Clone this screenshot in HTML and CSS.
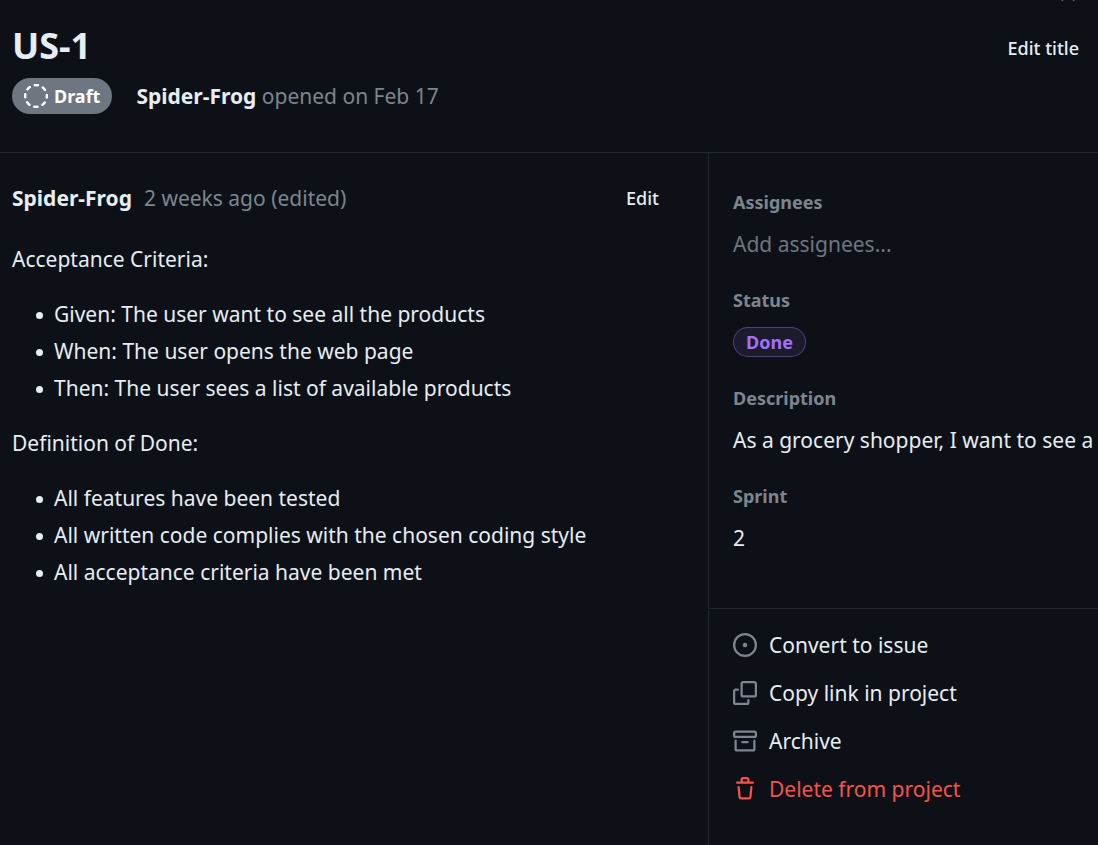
FILE: index.html
```html
<!DOCTYPE html>
<html lang="en">
<head>
<meta charset="utf-8">
<meta name="viewport" content="width=device-width, initial-scale=1">
<title>US-1</title>
<link rel="stylesheet" href="styles.css">
</head>
<body>
<div class="panel">
  <button class="close" type="button" aria-label="Close">
    <svg class="icon" viewBox="0 0 16 16" aria-hidden="true"><path d="M3.72 3.72a.75.75 0 0 1 1.06 0L8 6.94l3.22-3.22a.749.749 0 0 1 1.275.326.749.749 0 0 1-.215.734L9.06 8l3.22 3.22a.749.749 0 0 1-.326 1.275.749.749 0 0 1-.734-.215L8 9.06l-3.22 3.22a.751.751 0 0 1-1.042-.018.751.751 0 0 1-.018-1.042L6.94 8 3.72 4.78a.75.75 0 0 1 0-1.06Z"/></svg>
  </button>
  <header class="header">
    <div class="title-row">
      <h1 class="title">US-1</h1>
      <button class="text-button" type="button">Edit title</button>
    </div>
    <div class="meta">
      <span class="state">
        <svg class="icon" viewBox="0 0 16 16" aria-hidden="true"><circle cx="8" cy="8" r="7.25" fill="none" stroke="currentColor" stroke-width="1.6" stroke-linecap="round" stroke-dasharray="2.2 3.494" stroke-dashoffset="1.1"/></svg>
        Draft
      </span>
      <p class="opened"><strong class="author">Spider-Frog</strong> opened on Feb 17</p>
    </div>
  </header>
  <div class="columns">
    <main class="content">
      <div class="comment-head">
        <strong class="author">Spider-Frog</strong>
        <span class="time">2 weeks ago (edited)</span>
        <button class="text-button edit" type="button">Edit</button>
      </div>
      <div class="body">
        <p>Acceptance Criteria:</p>
        <ul>
          <li>Given: The user want to see all the products</li>
          <li>When: The user opens the web page</li>
          <li>Then: The user sees a list of available products</li>
        </ul>
        <p>Definition of Done:</p>
        <ul>
          <li>All features have been tested</li>
          <li>All written code complies with the chosen coding style</li>
          <li>All acceptance criteria have been met</li>
        </ul>
      </div>
    </main>
    <aside class="sidebar">
      <dl class="fields">
        <div class="field"><dt>Assignees</dt><dd><button class="value placeholder" type="button">Add assignees...</button></dd></div>
        <div class="field"><dt>Status</dt><dd><button class="value" type="button"><span class="status">Done</span></button></dd></div>
        <div class="field"><dt>Description</dt><dd><button class="value" type="button">As a grocery shopper, I want to see a</button></dd></div>
        <div class="field"><dt>Sprint</dt><dd><button class="value" type="button">2</button></dd></div>
      </dl>
      <div class="actions">
        <button class="action" type="button">
          <svg class="icon" viewBox="0 0 16 16" aria-hidden="true"><path d="M8 9.5a1.5 1.5 0 1 0 0-3 1.5 1.5 0 0 0 0 3Z"/><path d="M8 0a8 8 0 1 1 0 16A8 8 0 0 1 8 0ZM1.5 8a6.5 6.5 0 1 0 13 0 6.5 6.5 0 0 0-13 0Z"/></svg>
          Convert to issue
        </button>
        <button class="action" type="button">
          <svg class="icon" viewBox="0 0 16 16" aria-hidden="true"><path d="M0 6.75C0 5.784.784 5 1.75 5h1.5a.75.75 0 0 1 0 1.5h-1.5a.25.25 0 0 0-.25.25v7.5c0 .138.112.25.25.25h7.5a.25.25 0 0 0 .25-.25v-1.5a.75.75 0 0 1 1.5 0v1.5A1.75 1.75 0 0 1 9.25 16h-7.5A1.75 1.75 0 0 1 0 14.25Z"/><path d="M5 1.75C5 .784 5.784 0 6.75 0h7.5C15.216 0 16 .784 16 1.75v7.5A1.75 1.75 0 0 1 14.25 11h-7.5A1.75 1.75 0 0 1 5 9.25Zm1.75-.25a.25.25 0 0 0-.25.25v7.5c0 .138.112.25.25.25h7.5a.25.25 0 0 0 .25-.25v-7.5a.25.25 0 0 0-.25-.25Z"/></svg>
          Copy link in project
        </button>
        <button class="action" type="button">
          <svg class="icon" viewBox="0 0 16 16" aria-hidden="true"><path d="M0 2.75C0 1.784.784 1 1.75 1h12.5c.966 0 1.75.784 1.75 1.75v1.5A1.75 1.75 0 0 1 14.25 6H1.75A1.75 1.75 0 0 1 0 4.25ZM1.75 7a.75.75 0 0 1 .75.75v5.5c0 .138.112.25.25.25h10.5a.25.25 0 0 0 .25-.25v-5.5a.75.75 0 0 1 1.5 0v5.5A1.75 1.75 0 0 1 13.25 15H2.75A1.75 1.75 0 0 1 1 13.25v-5.5A.75.75 0 0 1 1.75 7Zm0-4.5a.25.25 0 0 0-.25.25v1.5c0 .138.112.25.25.25h12.5a.25.25 0 0 0 .25-.25v-1.5a.25.25 0 0 0-.25-.25ZM6.25 8h3.5a.75.75 0 0 1 0 1.5h-3.5a.75.75 0 0 1 0-1.5Z"/></svg>
          Archive
        </button>
        <button class="action danger" type="button">
          <svg class="icon" viewBox="0 0 16 16" aria-hidden="true"><path d="M11 1.75V3h2.25a.75.75 0 0 1 0 1.5H2.75a.75.75 0 0 1 0-1.5H5V1.75C5 .784 5.784 0 6.75 0h2.5C10.216 0 11 .784 11 1.75ZM4.496 6.675l.66 6.6a.25.25 0 0 0 .249.225h5.19a.25.25 0 0 0 .249-.225l.66-6.6a.75.75 0 0 1 1.492.149l-.66 6.6A1.748 1.748 0 0 1 10.595 15h-5.19a1.75 1.75 0 0 1-1.741-1.575l-.66-6.6a.75.75 0 1 1 1.492-.15ZM6.5 1.75V3h3V1.75a.25.25 0 0 0-.25-.25h-2.5a.25.25 0 0 0-.25.25Z"/></svg>
          Delete from project
        </button>
      </div>
    </aside>
  </div>
</div>
</body>
</html>
```

FILE: styles.css
```css
:root {
  --bg: #0d1117;
  --text: #e6edf3;
  --muted: #7d8590;
  --faint: #6e7681;
  --line: #21262d;
}

* {
  box-sizing: border-box;
}

body {
  margin: 0;
  background: var(--bg);
  color: var(--text);
  font: 21px/32px "Noto Sans", sans-serif;
}

h1, p, ul, dl, dd {
  margin: 0;
}

button {
  border: 0;
  padding: 0;
  background: none;
  color: inherit;
  font: inherit;
  text-align: left;
  cursor: pointer;
}

.icon {
  flex: none;
  width: 24px;
  height: 24px;
  fill: currentColor;
}

.panel {
  position: relative;
  display: flex;
  flex-direction: column;
  min-height: 100vh;
  overflow: hidden;
}

.close {
  position: absolute;
  top: -18px;
  right: 18px;
  display: flex;
  color: var(--muted);
}

.header {
  padding: 24px 12px 38px;
  border-bottom: 1px solid var(--line);
}

.title-row {
  display: flex;
  align-items: flex-start;
  justify-content: space-between;
  padding-right: 7px;
}

.title {
  font-size: 36px;
  line-height: 44px;
  font-weight: 700;
}

.text-button {
  font-size: 18px;
  font-weight: 500;
}

.title-row .text-button {
  line-height: 48px;
}

.meta {
  display: flex;
  align-items: center;
  gap: 24px;
  margin-top: 6px;
}

.state {
  display: inline-flex;
  align-items: center;
  gap: 6px;
  height: 36px;
  padding: 0 12px;
  border-radius: 18px;
  background: #6e7681;
  color: #fff;
  font-size: 18px;
  font-weight: 700;
}

.opened, .time {
  color: var(--muted);
}

.author {
  color: var(--text);
  font-weight: 700;
}

.columns {
  flex: 1;
  display: grid;
  grid-template-columns: minmax(0, 1fr) 390px;
}

.content {
  padding: 29px 48px 24px 12px;
}

.comment-head {
  display: flex;
  align-items: center;
  gap: 12px;
}

.edit {
  margin-left: auto;
  margin-right: 1px;
}

.body {
  display: flex;
  flex-direction: column;
  gap: 23px;
  margin-top: 29px;
}

.body ul {
  display: flex;
  flex-direction: column;
  gap: 5px;
  padding-left: 24px;
  list-style: none;
}

.body li {
  display: flex;
  gap: 11px;
}

.body li::before {
  content: "";
  flex: none;
  width: 7px;
  height: 7px;
  margin-top: 14px;
  border-radius: 50%;
  background: currentColor;
}

.sidebar {
  border-left: 1px solid var(--line);
}

.fields {
  display: flex;
  flex-direction: column;
  gap: 23px;
  padding: 36px 0 50px 24px;
}

.field {
  display: grid;
  gap: 7px;
}

.field dt {
  color: var(--muted);
  font-size: 18px;
  line-height: 27px;
  font-weight: 700;
}

.value {
  display: flex;
  align-items: center;
  height: 41px;
  white-space: nowrap;
}

.placeholder {
  color: var(--faint);
}

.status {
  height: 30px;
  padding: 0 12px;
  border: 1px solid rgba(163, 113, 247, 0.4);
  border-radius: 15px;
  background: rgba(163, 113, 247, 0.1);
  color: #a371f7;
  font-size: 18px;
  line-height: 28px;
  font-weight: 700;
}

.actions {
  display: flex;
  flex-direction: column;
  padding: 12px 24px;
  border-top: 1px solid var(--line);
}

.action {
  display: flex;
  align-items: center;
  gap: 12px;
  height: 48px;
}

.action .icon {
  color: var(--muted);
}

.danger, .action.danger .icon {
  color: #f85149;
}
```
